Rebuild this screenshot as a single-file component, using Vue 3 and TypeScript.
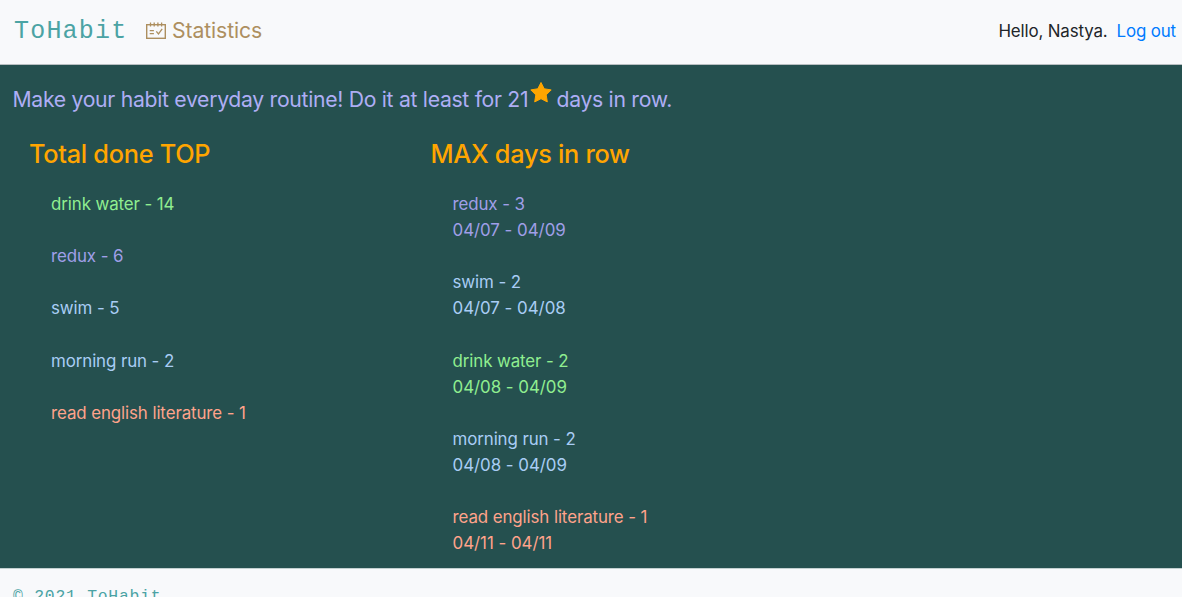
<script setup lang="ts">
interface Habit {
  name: string
  count: number
  tone: string
  range?: string
}

const totals: Habit[] = [
  { name: 'drink water', count: 14, tone: 'green' },
  { name: 'redux', count: 6, tone: 'violet' },
  { name: 'swim', count: 5, tone: 'blue' },
  { name: 'morning run', count: 2, tone: 'blue' },
  { name: 'read english literature', count: 1, tone: 'salmon' },
]

const streaks: Habit[] = [
  { name: 'redux', count: 3, tone: 'violet', range: '04/07 - 04/09' },
  { name: 'swim', count: 2, tone: 'blue', range: '04/07 - 04/08' },
  { name: 'drink water', count: 2, tone: 'green', range: '04/08 - 04/09' },
  { name: 'morning run', count: 2, tone: 'blue', range: '04/08 - 04/09' },
  { name: 'read english literature', count: 1, tone: 'salmon', range: '04/11 - 04/11' },
]
</script>

<template>
  <div class="page">
    <header class="navbar">
      <a class="brand">ToHabit</a>
      <a class="stats">
        <svg class="calendar" viewBox="0 0 20 17" fill="none" stroke="currentColor">
          <rect x="0.7" y="2.7" width="18.6" height="13.6" stroke-width="1.4" />
          <path d="M4.5 0.5v4M8.2 0.5v4M11.9 0.5v4M15.6 0.5v4" stroke-width="1.3" />
          <path d="M3.7 8.6h4.2M3.7 11.7h4.2M10.3 9.3l2.2 2.6 3.7-5" stroke-width="1.3" />
        </svg>
        <span>Statistics</span>
      </a>
      <div class="user"><span class="hello">Hello, Nastya.</span><a class="logout">Log out</a></div>
    </header>
    <main class="content">
      <p class="motto">
        <span class="motto-start">Make your habit everyday routine! Do it at least for 21</span>
        <svg class="star" viewBox="0 0 22 21">
          <path d="M11 0.5l3.2 6.3 7 1.1-5 5 1.1 7L11 16.7l-6.3 3.2 1.1-7-5-5 7-1.1z" fill="#ffa500" stroke="#ffa500" stroke-linejoin="round" />
        </svg>
        <span class="motto-end">days in row.</span>
      </p>
      <div class="columns">
        <section class="column">
          <h2>Total done TOP</h2>
          <ul>
            <li v-for="habit in totals" :key="habit.name" :class="habit.tone">
              <span>{{ habit.name }} - {{ habit.count }}</span>
            </li>
          </ul>
        </section>
        <section class="column">
          <h2>MAX days in row</h2>
          <ul>
            <li v-for="habit in streaks" :key="habit.name" :class="habit.tone">
              <span>{{ habit.name }} - {{ habit.count }}</span>
              <span class="range">{{ habit.range }}</span>
            </li>
          </ul>
        </section>
      </div>
    </main>
    <footer class="footer">© 2021 ToHabit</footer>
  </div>
</template>

<style>
body {
  margin: 0;
  overflow: hidden;
}
</style>

<style scoped>
.page {
  height: 597px;
  display: flex;
  flex-direction: column;
  overflow: hidden;
  font-family: Inter, "Liberation Sans", sans-serif;
  font-size: 16.9px;
  line-height: 26.1px;
  background: #f8f9fb;
}
.navbar {
  box-sizing: border-box;
  flex: none;
  height: 65px;
  padding: 0 6px 3px 14px;
  border-bottom: 1px solid #b9bfc2;
  display: flex;
  align-items: center;
}
.brand {
  color: #4ba3a4;
  font-family: "Liberation Mono", monospace;
  font-size: 25px;
  letter-spacing: 1.2px;
  width: 132px;
  padding-top: 4px;
}
.stats {
  display: flex;
  align-items: center;
  color: #ad8f5f;
  font-size: 21.2px;
  letter-spacing: -0.1px;
}
.calendar {
  width: 20px;
  height: 17px;
  margin-right: 6px;
}
.user {
  margin-left: auto;
  padding-top: 2px;
  display: flex;
  color: #212529;
  letter-spacing: -0.14px;
}
.logout {
  margin-left: 9px;
  color: #007bff;
}
.content {
  box-sizing: border-box;
  flex: none;
  height: 503px;
  padding: 18px 13px 0 12.5px;
  background: #25504f;
}
.motto {
  display: flex;
  margin: 0;
  height: 33px;
  line-height: 33px;
  font-size: 21.2px;
  color: #aeaef5;
}
.motto-start {
  width: 517px;
  white-space: nowrap;
  letter-spacing: -0.3px;
}
.star {
  width: 22px;
  height: 21px;
  margin-top: -1px;
}
.motto-end {
  margin-left: 5px;
  letter-spacing: -0.3px;
}
.columns {
  display: flex;
  padding: 22px 0 0 16.5px;
}
.column {
  width: 401.5px;
}
h2 {
  margin: 0;
  font-size: 25.3px;
  line-height: 32px;
  font-weight: 500;
  letter-spacing: -0.28px;
  color: #ffa500;
}
ul {
  list-style: none;
  margin: 0;
  padding: 21px 0 0 22px;
  letter-spacing: -0.1px;
}
li {
  display: flex;
  flex-direction: column;
  margin-bottom: 26.1px;
}
.range {
  letter-spacing: -0.03px;
}
.green { color: #90ee90; }
.violet { color: #a09fe8; }
.blue { color: #a9cdf5; }
.salmon { color: #ffa38b; }
.footer {
  flex: 1;
  border-top: 1px solid #c3d0d1;
  padding: 15px 13px 0;
  color: #4ba3a4;
  font-family: "Liberation Mono", monospace;
  font-size: 16.4px;
  letter-spacing: 0.76px;
}
</style>
